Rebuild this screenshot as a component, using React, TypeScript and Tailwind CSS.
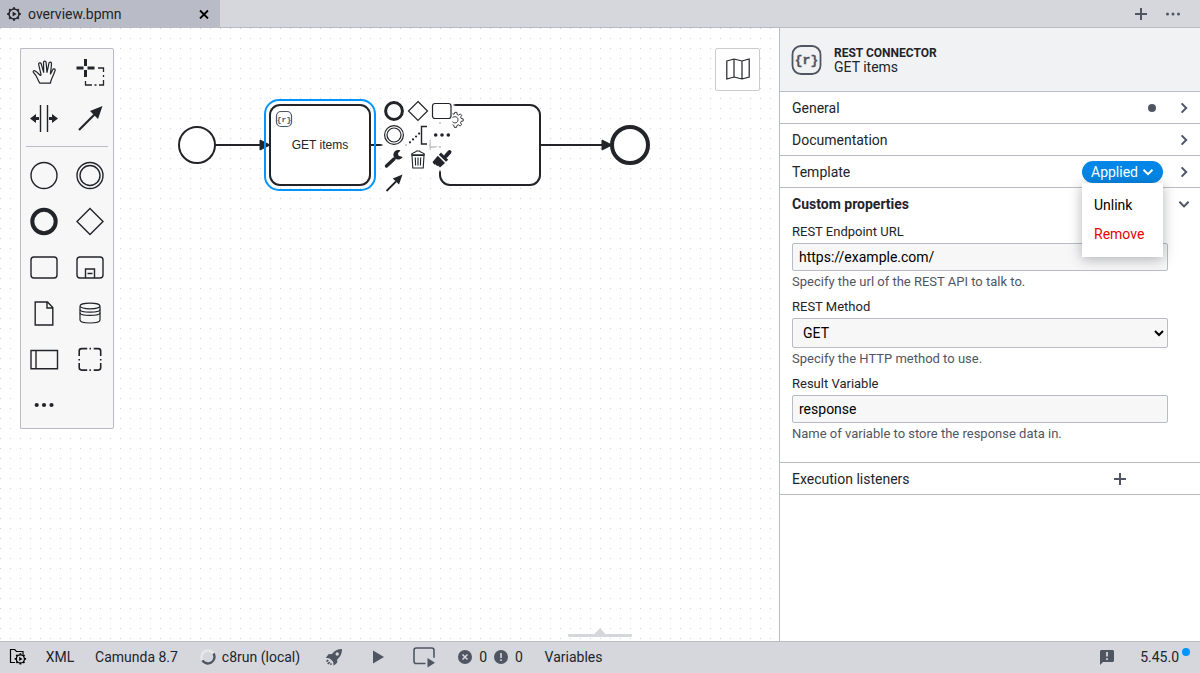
import type { ReactNode } from 'react';

interface IconProps {
  children: ReactNode;
  size: number;
  className?: string;
}

function Icon({ children, size, className = '' }: IconProps) {
  return (
    <svg
      width={size}
      height={size}
      viewBox={`0 0 ${size} ${size}`}
      fill="none"
      stroke="currentColor"
      strokeWidth="1.4"
      className={`shrink-0 ${className}`}
      aria-hidden="true"
    >
      {children}
    </svg>
  );
}

const GEAR =
  'M7 .2v2M7 11.8v2M.2 7h2M11.8 7h2M2.2 2.2l1.4 1.4M10.4 10.4l1.4 1.4M2.2 11.8l1.4-1.4M10.4 3.6l1.4-1.4';

function ProcessIcon() {
  return (
    <Icon size={14}>
      <circle cx="7" cy="7" r="5" strokeWidth="1.5" />
      <path d={GEAR} strokeWidth="2" />
      <path d="M5.6 4.6v4.8L9.6 7z" fill="currentColor" stroke="none" />
    </Icon>
  );
}

function Chevron({ down = false }: { down?: boolean }) {
  return (
    <Icon size={16} className="text-[#505562]">
      <path d={down ? 'M3.4 5.8 8 10.4l4.6-4.6' : 'M5.6 3.4 10.2 8l-4.6 4.6'} strokeWidth="2" />
    </Icon>
  );
}

function PlusIcon() {
  return (
    <Icon size={12} className="text-[#505562]">
      <path d="M6 0v12M0 6h12" strokeWidth="2" />
    </Icon>
  );
}

/* Palette */

const toolEntries = [
  {
    title: 'Activate hand tool',
    icon: (
      <path
        d="M18.8 34.2h10.600c.5-2.600 1.200-4.400 2.300-6.600.9-1.900 1.700-4.100 2.500-6.300.3-1.500-1.700-2.100-2.400-.7l-2.400 4.700c.2-3.600 1.100-7.200 1.100-10.700 0-1.800-2.300-1.900-2.600-.2l-1.900 9.300-.9-10.300c-.2-1.700-2.600-1.700-2.600 0l.2 10.300-2.500-8.900c-.6-1.600-2.900-1-2.500.8l2.300 9.800c.1 1-.4 1.300-1 .8-1.700-1.700-3.200-3.500-5.200-4.400-1.300-.4-2.100.8-1.300 1.700 3.500 3.200 4.200 7.400 6.300 10.700z"
        strokeWidth="1.2"
      />
    ),
  },
  {
    title: 'Activate lasso tool',
    icon: (
      <>
        <path d="M18.5 10v7M18.5 21v7M9.5 19h7M20.5 19h7" strokeWidth="3" />
        <path d="M31 19h5.5v4M36.5 26v2M36.5 31v5H32M29.5 36h-2M25 36h-6.5v-4" strokeWidth="1.3" />
      </>
    ),
  },
  {
    title: 'Activate create/remove space tool',
    icon: (
      <>
        <path d="M19.5 10v27M26.5 10v27" />
        <path d="M9 23.5l6-4.5v3h3v3h-3v3zM37 23.5l-6-4.5v3h-3v3h3v3z" fill="currentColor" stroke="none" />
      </>
    ),
  },
  {
    title: 'Activate global connect tool',
    icon: (
      <>
        <path d="M12 35 28 19" strokeWidth="2.2" />
        <path d="M35.5 11l-4.5 13-8-8z" fill="currentColor" stroke="none" />
      </>
    ),
  },
];

const shapeEntries = [
  { title: 'Create start event', icon: <circle cx="23" cy="23.5" r="13" /> },
  {
    title: 'Create intermediate event',
    icon: (
      <>
        <circle cx="23" cy="23.5" r="13" />
        <circle cx="23" cy="23.5" r="10" />
      </>
    ),
  },
  { title: 'Create end event', icon: <circle cx="23" cy="23.5" r="11.7" strokeWidth="4" /> },
  { title: 'Create gateway', icon: <path d="M23 10.5l13 13-13 13-13-13z" /> },
  { title: 'Create task', icon: <rect x="10" y="13" width="26" height="21" rx="3" /> },
  {
    title: 'Create expanded sub-process',
    icon: (
      <>
        <rect x="10" y="13" width="26" height="21" rx="3" />
        <path d="M18.5 34v-9h9v9M20.5 29.5h5" />
      </>
    ),
  },
  {
    title: 'Create data object',
    icon: <path d="M14.2 12h12.300l5.300 5.500V35H14.200zM26 12v6h5.800" />,
  },
  {
    title: 'Create data store',
    icon: (
      <>
        <path d="M13 16.500v13.500c0 4 20 4 20 0V16.500" strokeWidth="1.2" />
        <ellipse cx="23" cy="16" rx="10" ry="2.8" strokeWidth="1.2" />
        <path d="M13 19.500c0 3.600 20 3.600 20 0M13 22.700c0 3.600 20 3.600 20 0" strokeWidth="1.2" />
      </>
    ),
  },
  {
    title: 'Create pool/participant',
    icon: <path d="M10 14.5h26.500v18.200H10zM15 14.500v18.200" />,
  },
  {
    title: 'Create group',
    icon: (
      <path
        transform="translate(.2 .6)"
        d="M20 12h-5.500c-1.500 0-2.500 1-2.500 2.500v5M12 22.300v1.500M12 26.500v4.500c0 1.500 1 2.500 2.500 2.500H20M22.200 33.500h1.500M26.500 33.500h4.500c1.500 0 2.500-1 2.500-2.500v-4.500M33.500 23.800v-1.500M33.500 19.500v-5c0-1.500-1-2.500-2.500-2.500h-4.500M22.300 12h1.500"
        strokeWidth="1.6"
      />
    ),
  },
  {
    title: 'Create element',
    icon: <path d="M15.7 23h0M23 23h0M30.5 23h0" strokeWidth="4.2" strokeLinecap="round" />,
  },
];

function PaletteEntry({ title, icon }: { title: string; icon: ReactNode }) {
  return (
    <button type="button" title={title} aria-label={title} className="size-[46px]">
      <Icon size={46}>{icon}</Icon>
    </button>
  );
}

function Palette() {
  return (
    <div className="absolute left-5 top-5 w-[94px] rounded-xs border border-[#b9bcc6] bg-[#f7f7f8]">
      <div className="grid grid-cols-2">
        {toolEntries.map((entry) => (
          <PaletteEntry key={entry.title} {...entry} />
        ))}
      </div>
      <hr className="m-[5px] border-[#b9bcc6]" />
      <div className="grid grid-cols-2">
        {shapeEntries.map((entry) => (
          <PaletteEntry key={entry.title} {...entry} />
        ))}
      </div>
    </div>
  );
}

/* Context pad */

const padEntries = [
  { title: 'Append end event', icon: <circle cx="11" cy="11" r="8.4" strokeWidth="3" /> },
  { title: 'Append gateway', icon: <path d="M11 1.5l9.500 9.500-9.500 9.500L1.500 11z" strokeWidth="1.2" /> },
  {
    title: 'Append task',
    icon: (
      <>
        <rect x="1.5" y="3.5" width="18.5" height="15" rx="2.5" strokeWidth="1.2" />
        <path
          transform="translate(19 11.5)"
          d="M2.500 2.200 4 2.800l.8-2 2.100.1.300 2.100 1.400.6 1.700-1.200 1.400 1.500-1.100 1.700.5 1.300 2.100.5v2.100l-2.100.4-.6 1.400 1.100 1.800-1.500 1.400-1.700-1.200-1.400.6-.5 2H4.400l-.5-2-1.300-.7M2.500 6.200C4 4.400 8 5 8 8.200s-3.500 4.200-5.500 2"
          strokeWidth=".9"
        />
      </>
    ),
  },
  {
    title: 'Append intermediate event',
    icon: (
      <>
        <circle cx="11" cy="11" r="9.4" strokeWidth="1.2" />
        <circle cx="11" cy="11" r="7" strokeWidth="1.2" />
      </>
    ),
  },
  {
    title: 'Add text annotation',
    icon: (
      <>
        <path d="M20 2.5h-5.500v17.500H20" />
        <path d="M3 18.300 12.200 9.500" strokeWidth="2.2" strokeLinecap="round" strokeDasharray="0 4.200" />
      </>
    ),
  },
  {
    title: 'Append element',
    icon: <path d="M4.700 11h0M11 11h0M17.300 11h0" strokeWidth="3.6" strokeLinecap="round" />,
  },
  {
    title: 'Change element',
    icon: (
      <>
        <path d="M3.500 18 11 11" strokeWidth="3.4" strokeLinecap="round" />
        <path
          d="M17.500 2.500c-4-1.500-8 1.500-6.900 5.800.8 3.700 6.400 4.600 9 .7l-4-1.200-.7-2.600z"
          fill="currentColor"
          stroke="none"
        />
      </>
    ),
  },
  {
    title: 'Delete',
    icon: (
      <path
        d="M5 7.500l.8 12.500h10.400L17 7.500zM4 6.800h14M4.500 6C7 4 9 4.200 9.500 3h3C13 4.200 15 4 17.500 6M8.300 9.500l.3 8M11 9.500v8M13.700 9.500l-.3 8"
        strokeWidth="1.1"
      />
    ),
  },
  {
    title: 'Set color',
    icon: (
      <g transform="translate(1 -.5)">
        <path d="M14 8.500 17.500 4.500" strokeWidth="4" strokeLinecap="round" />
        <path
          d="M9 5 16.200 12.200l-2.200 2L6.800 7.200zM5.800 8.200l7.200 7.200-5 4.600-2-2-.8.800-1.800-2-1 .4-1.900-2.600z"
          fill="currentColor"
          stroke="none"
        />
      </g>
    ),
  },
  {
    title: 'Connect to other element',
    icon: (
      <>
        <path d="M3.500 19 13 9.500" strokeWidth="1.8" />
        <path d="M19.500 2.500 16 12.500 9.800 6.500z" fill="currentColor" stroke="none" />
      </>
    ),
  },
];

function ContextPad() {
  return (
    <div className="absolute left-[383px] top-[72px] grid grid-cols-3 gap-0.5">
      {padEntries.map(({ title, icon }) => (
        <button
          key={title}
          type="button"
          title={title}
          aria-label={title}
          className="size-[22px] bg-white shadow-[0_0_2px_1px_#fff]"
        >
          <Icon size={22} className="relative overflow-visible">
            {icon}
          </Icon>
        </button>
      ))}
    </div>
  );
}

function Diagram() {
  return (
    <svg className="absolute inset-0 size-full" aria-label="Diagram" fill="white" stroke="#22242a" strokeWidth="2">
      <defs>
        <pattern id="grid" width="10" height="10" patternUnits="userSpaceOnUse">
          <circle cx="0.5" cy="0.5" r="0.5" fill="#c4c4c4" stroke="none" />
        </pattern>
        <marker id="arrow" viewBox="0 0 20 20" refX="11" refY="10" markerWidth="10" markerHeight="10" markerUnits="strokeWidth" orient="auto">
          <path d="M1 5 11 10 1 15z" fill="#22242a" strokeWidth="1" />
        </marker>
      </defs>
      <rect width="100%" height="100%" fill="url(#grid)" stroke="none" />
      <circle cx="197" cy="117" r="18" />
      <rect x="270" y="77" width="100" height="80" rx="10" />
      <rect x="440" y="77" width="100" height="80" rx="10" />
      <circle cx="630" cy="117" r="18" strokeWidth="4" />
      <path d="M215 117h55" markerEnd="url(#arrow)" />
      <path d="M370 117h70" markerEnd="url(#arrow)" />
      <path d="M540 117h72" markerEnd="url(#arrow)" />
      <rect x="265" y="72" width="110" height="90" rx="14" fill="none" stroke="#0095ff" />
      <rect x="276.5" y="83.5" width="15" height="15" rx="4.5" stroke="#505562" strokeWidth="1.2" />
      <g stroke="none" textAnchor="middle">
        <text x="284" y="94" fill="#505562" className="font-['Liberation_Mono',monospace] text-[8px] font-bold">
          {'{r}'}
        </text>
        <text x="320" y="121" fill="#22242a" className="font-['Liberation_Sans',sans-serif] text-[12px]">
          GET items
        </text>
      </g>
    </svg>
  );
}

/* Properties panel */

function GroupHeader({ title, children }: { title: string; children?: ReactNode }) {
  return (
    <div className="flex h-8 items-center border-b border-[#b9bcc6] pl-3 pr-2">
      <h3 className="flex-1">{title}</h3>
      {children}
    </div>
  );
}

function Field({ id, label, hint, children }: { id: string; label: string; hint: string; children: ReactNode }) {
  return (
    <div className="flex flex-col text-[13px] leading-4">
      <label htmlFor={id} className="mb-[3px]">
        {label}
      </label>
      {children}
      <p className="mt-[3px] text-[#505562]">{hint}</p>
    </div>
  );
}

function TemplateMenu() {
  return (
    <div className="relative mr-[13px]">
      <button type="button" aria-expanded="true" className="flex h-[22px] w-[81px] items-center justify-center gap-1 rounded-full bg-[#0086e6] text-white">
        Applied
        <Icon size={12}>
          <path d="M1.5 3.7 6 8.2l4.5-4.5" strokeWidth="2" />
        </Icon>
      </button>
      <div role="menu" className="absolute left-0 top-full z-10 flex w-full flex-col bg-white px-3 py-2 text-left leading-[29px] shadow-[0_2px_12px_rgba(34,36,42,0.35)]">
        <button type="button" role="menuitem" className="text-left text-black">
          Unlink
        </button>
        <button type="button" role="menuitem" className="text-left text-[#e60000]">
          Remove
        </button>
      </div>
    </div>
  );
}

function PropertiesPanel() {
  const inputClass = 'w-full rounded-xs border border-[#b9bcc6] bg-[#f7f7f8] text-sm text-black outline-none';

  return (
    <aside className="w-[421px] shrink-0 border-l border-[#b9bcc6] bg-white">
      <header className="flex h-16 items-center gap-3 border-b border-[#b9bcc6] bg-[#f1f2f4] pl-[11px]">
        <Icon size={31} className="text-[#505562]">
          <rect x="1.5" y="2" width="28" height="28" rx="8.5" strokeWidth="1.8" />
          <text
            x="15.5"
            y="20"
            textAnchor="middle"
            fill="currentColor"
            strokeWidth=".3"
            className="font-['Liberation_Mono',monospace] text-[13px] font-bold"
          >
            {'{r}'}
          </text>
        </Icon>
        <div className="pt-px">
          <div className="text-xs/[14px] font-bold">REST CONNECTOR</div>
          <div className="text-sm/[14px]">GET items</div>
        </div>
      </header>
      <GroupHeader title="General">
        <span className="mr-5 size-2 rounded-full bg-[#505562]" />
        <button type="button" aria-label="Expand General">
          <Chevron />
        </button>
      </GroupHeader>
      <GroupHeader title="Documentation">
        <button type="button" aria-label="Expand Documentation">
          <Chevron />
        </button>
      </GroupHeader>
      <GroupHeader title="Template">
        <TemplateMenu />
        <button type="button" aria-label="Expand Template">
          <Chevron />
        </button>
      </GroupHeader>
      <section className="border-b border-[#b9bcc6] pb-5">
        <div className="flex h-8 items-center pl-3 pr-2">
          <h3 className="flex-1 font-bold">Custom properties</h3>
          <button type="button" aria-label="Collapse Custom properties">
            <Chevron down />
          </button>
        </div>
        <div className="flex flex-col gap-[9px] pl-3 pr-8 pt-1">
          <Field id="url" label="REST Endpoint URL" hint="Specify the url of the REST API to talk to.">
            <input id="url" defaultValue="https://example.com/" className={`${inputClass} h-7 px-1.5`} />
          </Field>
          <Field id="method" label="REST Method" hint="Specify the HTTP method to use.">
            <select id="method" defaultValue="GET" className={`${inputClass} h-[30px] px-1.5`}>
              <option>GET</option>
              <option>POST</option>
              <option>PUT</option>
              <option>DELETE</option>
            </select>
          </Field>
          <Field id="result" label="Result Variable" hint="Name of variable to store the response data in.">
            <input id="result" defaultValue="response" className={`${inputClass} h-7 px-1.5`} />
          </Field>
        </div>
      </section>
      <GroupHeader title="Execution listeners">
        <button type="button" aria-label="Create execution listener" className="mr-[66px]">
          <PlusIcon />
        </button>
      </GroupHeader>
    </aside>
  );
}

function StatusBar() {
  const item = 'flex items-center justify-center';

  return (
    <footer className="flex h-8 shrink-0 border-t border-[#b9bcc6] bg-[#d5d7dd] pb-px">
      <button type="button" aria-label="Open process application" className={`${item} w-9 text-black`}>
        <Icon size={18}>
          <path d="M6 14.5H1.500v-13h4.200l1.800 2H14v3" strokeWidth="1.2" />
          <g transform="translate(5.5 5) scale(.84)">
            <circle cx="7" cy="7" r="4.8" strokeWidth="1.5" />
            <path d={GEAR} strokeWidth="2.2" />
            <path d="M5.6 4.6v4.8L9.6 7z" fill="currentColor" stroke="none" />
          </g>
        </Icon>
      </button>
      <button type="button" className={`${item} w-12`}>
        XML
      </button>
      <button type="button" className={`${item} w-[105px]`}>
        Camunda 8.7
      </button>
      <button type="button" className={`${item} w-[122px] gap-1.5`}>
        <Icon size={16} className="text-[#505562]">
          <circle cx="8" cy="8" r="6.5" stroke="#e6e7ea" strokeWidth="2.4" />
          <path d="M13.500 4.500A6.500 6.500 0 0 1 2.400 11.300" strokeWidth="2.4" />
        </Icon>
        c8run (local)
      </button>
      <button type="button" aria-label="Deploy" className={`${item} w-[45px] text-[#505562]`}>
        <Icon size={18}>
          <path
            d="M17 1c-4.500 0-7.500 1.500-10 5L3.500 6.200.8 9.800l4 .6 3.300 3.400.5 4 3.600-3V11.500C15.500 8.800 17 5.500 17 1zm-4.800 3.300a1.700 1.700 0 1 1 0 3.400 1.700 1.700 0 0 1 0-3.400z"
            fill="currentColor"
            fillRule="evenodd"
            stroke="none"
          />
          <path d="M3.200 12 1.500 13.700M4.700 14 2.800 16M6.500 15.500 5.300 16.700" strokeWidth="1.7" />
        </Icon>
      </button>
      <button type="button" aria-label="Start instance" className={`${item} w-11 text-[#505562]`}>
        <Icon size={14}>
          <path d="M2 .5v13l11-6.500z" fill="currentColor" stroke="none" />
        </Icon>
      </button>
      <button type="button" aria-label="Task testing" className={`${item} w-[47px] text-[#505562]`}>
        <Icon size={22}>
          <path d="M12.500 17.500H3.200C1.800 17.500 1 16.700 1 15.200V4.300C1 2.800 1.800 2 3.200 2h15.600c1.400 0 2.200.8 2.200 2.300v7.500" strokeWidth="1.6" />
          <path d="M14.500 12v9.500l7.500-4.700z" fill="currentColor" stroke="none" />
        </Icon>
      </button>
      <button type="button" aria-label="Problems: 0 errors, 0 warnings" className={`${item} w-[87px] gap-[7px]`}>
        <Icon size={14} className="text-[#505562]">
          <circle cx="7" cy="7" r="7" fill="currentColor" stroke="none" />
          <path d="M4.500 4.500l5 5M9.500 4.500l-5 5" stroke="#d5d7dd" strokeWidth="1.5" />
        </Icon>
        <span>0</span>
        <Icon size={14} className="text-[#505562]">
          <circle cx="7" cy="7" r="7" fill="currentColor" stroke="none" />
          <path d="M7 3v5M7 9.300v1.700" stroke="#d5d7dd" strokeWidth="1.6" />
        </Icon>
        <span>0</span>
      </button>
      <button type="button" className={`${item} w-[79px]`}>
        Variables
      </button>
      <button type="button" aria-label="Give feedback" className={`${item} ml-auto mr-[25px] text-[#505562]`}>
        <Icon size={16}>
          <path d="M2.500 1h11c.9 0 1.500.6 1.500 1.500v9c0 .9-.6 1.500-1.500 1.500H4l-3 3V2.500C1 1.600 1.600 1 2.500 1z" fill="currentColor" stroke="none" />
          <path d="M8 3v4.500M8 9.200V11" stroke="#d5d7dd" strokeWidth="1.8" />
        </Icon>
      </button>
      <button type="button" className={`${item} relative mr-[21px]`}>
        5.45.0
        <span className="absolute -right-[11px] top-1.5 size-2 rounded-full bg-[#0095ff]" />
      </button>
    </footer>
  );
}

export default function App() {
  return (
    <div className="flex h-screen flex-col overflow-hidden bg-white font-[Roboto,'Liberation_Sans',sans-serif] text-sm text-[#22242a]">
      <header className="flex h-7 shrink-0 items-stretch bg-[#d5d7dd]">
        <div className="flex w-[220px] items-center gap-[7px] bg-[#b9bcc6] px-[7px]">
          <ProcessIcon />
          <span className="flex-1">overview.bpmn</span>
          <button type="button" aria-label="Close tab" className="mr-1 text-black">
            <Icon size={10}>
              <path d="M1 1.500l8 8M9 1.500l-8 8" strokeWidth="1.8" />
            </Icon>
          </button>
        </div>
        <div className="flex flex-1 items-center justify-end gap-[19px] border-b border-[#b9bcc6] pr-5 text-[#505562]">
          <button type="button" aria-label="Create new">
            <PlusIcon />
          </button>
          <button type="button" aria-label="Tab actions">
            <Icon size={14}>
              <path d="M1.500 7h0M7 7h0M12.500 7h0" strokeWidth="3" strokeLinecap="round" />
            </Icon>
          </button>
        </div>
      </header>

      <div className="relative flex min-h-0 flex-1">
        <main className="relative min-w-0 flex-1 overflow-hidden">
          <Diagram />
          <Palette />
          <ContextPad />
          <button
            type="button"
            aria-label="Toggle minimap"
            className="absolute right-[19px] top-5 flex h-[43px] w-[45px] items-center justify-center rounded-xs border border-[#ccc] bg-white"
          >
            <Icon size={24}>
              <path d="M.8 3 8 1l8 2 7.200-2v18L16 21l-8-2-7.200 2zM8 1v18M16 3v18" strokeWidth="1.2" />
            </Icon>
          </button>
        </main>
        <PropertiesPanel />
        <svg className="absolute bottom-1 left-1/2 -ml-8" width="64" height="9" fill="#d5d7dd" aria-hidden="true">
          <rect y="6" width="64" height="3" rx="1" />
          <path d="M26.500 6 32 0l5.500 6z" />
        </svg>
      </div>

      <StatusBar />
    </div>
  );
}
